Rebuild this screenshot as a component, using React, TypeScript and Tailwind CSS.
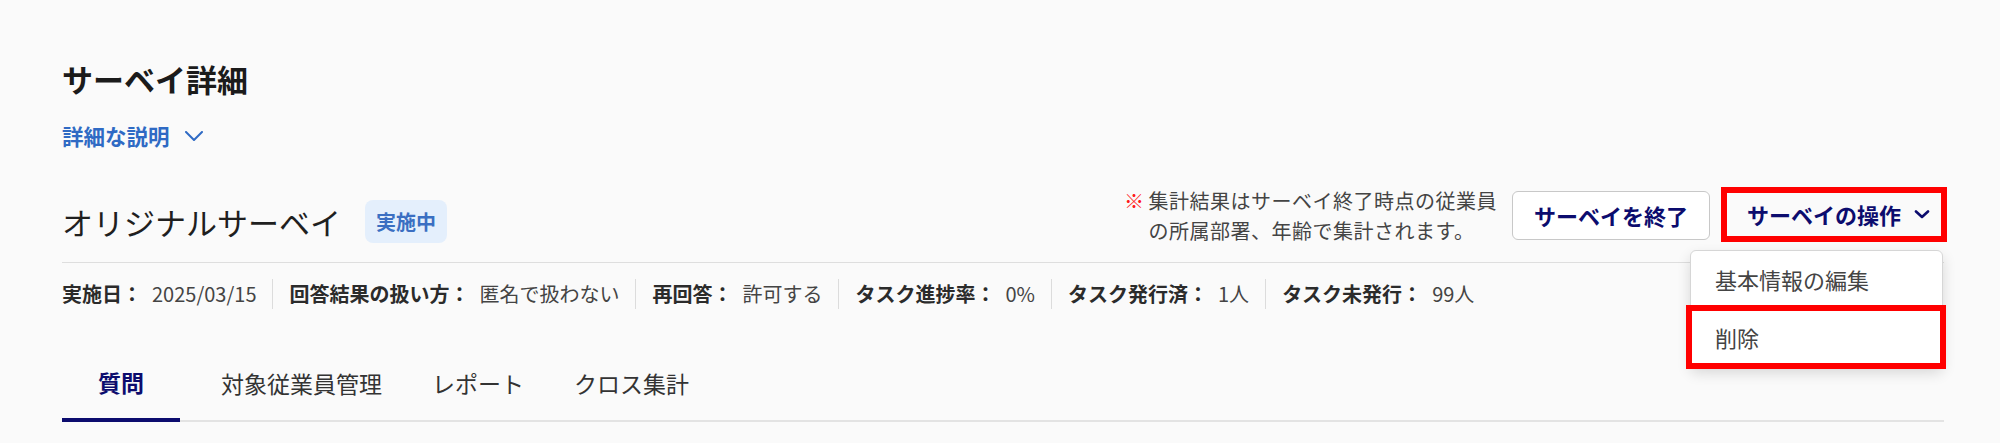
import React from "react";

const meta = [
  { label: "実施日：", value: "2025/03/15" },
  { label: "回答結果の扱い方：", value: "匿名で扱わない" },
  { label: "再回答：", value: "許可する" },
  { label: "タスク進捗率：", value: "0%" },
  { label: "タスク発行済：", value: "1人" },
  { label: "タスク未発行：", value: "99人" },
];

export default function App() {
  return (
    <div
      className="min-h-[443px] bg-[#fafafa] pl-[62px] pr-[56px] pt-[56px]"
      style={{ fontFamily: '"Noto Sans CJK JP", "Noto Sans", sans-serif' }}
    >
      {/* Header */}
      <h1 className="text-[31px] font-bold leading-[45px] text-[#1b1b1b]">サーベイ詳細</h1>
      <button className="mt-[20px] flex items-center gap-[15px] text-[21.5px] font-bold leading-[30px] text-[#2f6ac4]">
        詳細な説明
        <svg width="18" height="10" viewBox="0 0 18 10" fill="none">
          <path d="M1 1L9 9L17 1" stroke="#2f6ac4" strokeWidth="2" strokeLinecap="round" strokeLinejoin="round" />
        </svg>
      </button>

      {/* Survey name row */}
      <div className="mt-[35px] flex items-start">
        <div className="mt-[14px] flex items-center">
          <span className="text-[31px] leading-[43px] text-[#1f1f1f]">オリジナルサーベイ</span>
          <span className="ml-[24px] flex h-[43px] items-center rounded-[8px] bg-[#e4effc] px-[11px] text-[20px] font-bold text-[#3b6fc2]">
            実施中
          </span>
        </div>

        <div className="ml-auto flex items-start">
          <div className="flex text-[20px] leading-[30px] tracking-[0.5px] text-[#444]">
            <span className="mr-[4px] text-[#ff1a1a]">※</span>
            <p>
              集計結果はサーベイ終了時点の従業員
              <br />
              の所属部署、年齢で集計されます。
            </p>
          </div>
          <button className="ml-[15px] mt-[5px] h-[49px] w-[198px] rounded-[6px] border border-[#c8c8c8] bg-white text-[22px] font-bold text-[#0c0c6e]">
            サーベイを終了
          </button>
          <div className="relative ml-[11px] mt-[1px] -mr-[3px]">
            <button className="flex h-[55px] w-[226px] items-center border-[6px] border-[#ff0000] pl-[20px] pr-[11px] text-[22px] font-bold text-[#0c0c6e]">
              サーベイの操作
              <svg className="ml-auto" width="16" height="9" viewBox="0 0 16 9" fill="none">
                <path d="M2 1.5L8 7L14 1.5" stroke="#0c0c6e" strokeWidth="2.6" strokeLinecap="round" strokeLinejoin="round" />
              </svg>
            </button>

            {/* Dropdown menu */}
            <div className="absolute right-[4px] top-[calc(100%+8px)] z-10 w-[253px] rounded-[6px] border border-[#d6d6d6] bg-white shadow-[0_6px_14px_rgba(0,0,0,0.14)]">
              <div className="flex h-[57px] items-center px-[24px] text-[22px] text-[#444]">基本情報の編集</div>
              <div className="relative flex h-[58px] items-center px-[24px] text-[22px] text-[#444]">
                削除
                <span className="pointer-events-none absolute -bottom-[3px] -left-[5px] -right-[4px] -top-[3px] border-[6px] border-[#ff0000]" />
              </div>
            </div>
          </div>
        </div>
      </div>

      <div className="mt-[16px] h-px bg-[#dedede]" />

      {/* Meta */}
      <div className="mt-[16px] flex items-center text-[20px]">
        {meta.map((m, i) => (
          <React.Fragment key={m.label}>
            {i > 0 && <div className="mx-[16px] h-[30px] w-px bg-[#dcdcdc]" />}
            <div className="flex items-center whitespace-nowrap">
              <span className="font-bold text-[#2b2b2b]">{m.label}</span>
              <span className="ml-[10px] text-[#444]">{m.value}</span>
            </div>
          </React.Fragment>
        ))}
      </div>

      {/* Tabs */}
      <div className="mt-[38px] flex border-b-2 border-[#e3e3e3]">
        <div className="-mb-[2px] flex h-[75px] w-[118px] items-center justify-center border-b-4 border-[#0c0c6e] text-[23px] font-bold text-[#0c0c6e]">
          質問
        </div>
        <div className="ml-[16px] flex h-[73px] items-center px-[25px] text-[23px] text-[#333]">対象従業員管理</div>
        <div className="flex h-[73px] items-center px-[25px] text-[23px] text-[#333]">レポート</div>
        <div className="flex h-[73px] items-center px-[25px] text-[23px] text-[#333]">クロス集計</div>
      </div>
    </div>
  );
}
